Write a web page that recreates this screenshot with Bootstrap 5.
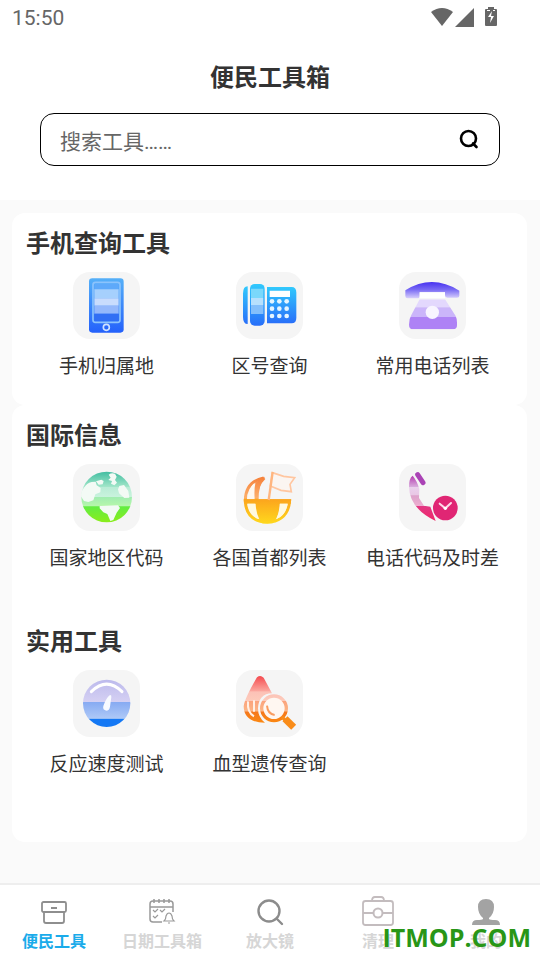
<!DOCTYPE html>
<html lang="zh-CN">
<head>
<meta charset="utf-8">
<meta name="viewport" content="width=device-width, initial-scale=1">
<title>便民工具箱</title>
<link href="https://cdn.jsdelivr.net/npm/bootstrap@5.3.0/dist/css/bootstrap.min.css" rel="stylesheet">
<style>
body{font-family:Roboto,"Noto Sans CJK SC",sans-serif;background:#fafafa;color:#333}
.status-bar{height:36px;padding:0 41px 0 12px;font-size:21px;line-height:36px;color:#666}
.status-bar svg{display:block}
.app-header{height:200px}
.app-title{font-size:24px;line-height:36px;margin:24px 0 17px}
.search-box{height:53px;margin:0 40px;padding:0 19px;border:1px solid #000;border-radius:14px}
.search-box input{font-size:21px;line-height:32px;color:#333}
.search-box input::placeholder{color:#666;opacity:1}
.tool-main{padding:13px 13px 40px 12px}
.tool-card{border-radius:13px;padding:13px 13px 24px}
.tool-card h2{font-size:24px;line-height:36px;margin:0 1px 10px}
.tool-group+.tool-group{margin-top:51px}
.tool-card-tall{padding-bottom:63px}
.tool{color:#333;font-size:19px;line-height:28px}
.tool svg{width:67px;height:67px;border-radius:17px;background:#f5f5f5;margin-bottom:14px}
.tab-bar{height:77px;border-top:2px solid #eee}
.tab-item{font-size:16px;line-height:24px;color:#d6d6d6;padding-top:9px}
.tab-item svg{width:36px;height:36px}
.tab-item.active{color:#1aabea}
.site-mark{position:absolute;right:9px;bottom:5px;font:700 25px/36px "Open Sans","Noto Sans",sans-serif;color:#289617;pointer-events:none}
</style>
</head>
<body>
<div class="d-flex flex-column min-vh-100">
<header class="app-header bg-white">
  <div class="status-bar d-flex justify-content-between align-items-center">
    <span>15:50</span>
    <svg width="68" height="24" viewBox="0 0 68 24" fill="#666" aria-hidden="true"><path d="M0 6Q11-2 22 6L11 20Z"/><path d="M43 2v19H24Z"/><path d="M57 1h6v2h2q1 0 1 1v15q0 1-1 1H55q-1 0-1-1V4q0-1 1-1h2Z"/><path fill="#fff" d="M61 5l-4 6h3l-1 6 4-7h-3ZM56 4h3v1h-3ZM62 4h2v1h-2Z"/></svg>
  </div>
  <h1 class="app-title fw-bold text-center">便民工具箱</h1>
  <form class="search-box d-flex align-items-center">
    <input class="flex-grow-1 border-0 bg-transparent p-0 pt-1" type="text" aria-label="搜索工具" placeholder="搜索工具……">
    <button class="btn p-0 border-0 d-flex" type="button" aria-label="搜索"><svg width="22" height="22" viewBox="0 0 22 22" fill="none" stroke="#000" stroke-width="2.600" stroke-linecap="round"><circle cx="10.500" cy="9.500" r="7.500"/><path d="M15 14.500L18.500 18"/></svg></button>
  </form>
</header>

<main class="tool-main flex-grow-1">
  <section class="tool-card bg-white">
    <h2 class="fw-bold">手机查询工具</h2>
    <div class="row row-cols-3 g-0 text-center">
      <a class="tool col d-flex flex-column align-items-center text-decoration-none" href="#">
        <svg viewBox="39 30 201 201" aria-hidden="true"><defs><linearGradient id="blue" x2="0" y2="1"><stop stop-color="#55b0f8"/><stop offset="1" stop-color="#2461fb"/></linearGradient></defs><rect x="87" y="49" width="104" height="163" rx="10" fill="url(#blue)"/><path fill="#5ea9fa" d="M103 65h73v20h-73Z"/><path fill="#a6d0fd" d="M103 82h73v27h-73Z"/><path fill="#c8dcfd" d="M103 109h73v22h-73Z"/><path fill="#94b8fb" d="M103 131h73v24h-73Z"/><path fill="#316ff4" d="M103 155h73v21h-73Z"/><rect x="99" y="61" width="81" height="120" rx="7" fill="none" stroke="#8cc3fc" stroke-width="5"/><circle cx="139" cy="196" r="9" fill="none" stroke="#cfe2ff" stroke-width="5"/></svg>
        <span>手机归属地</span></a>
      <a class="tool col d-flex flex-column align-items-center text-decoration-none" href="#">
        <svg viewBox="33 30 201 201" aria-hidden="true"><defs><linearGradient id="cyan" x2="0" y2="1"><stop stop-color="#31c9fd"/><stop offset="1" stop-color="#286ff9"/></linearGradient></defs><path fill="url(#cyan)" d="M68 73v113q-14 0-14-22V95q0-22 14-22Z"/><rect x="75" y="66" width="44" height="125" rx="14" fill="url(#cyan)"/><path fill="#7ad8fb" d="M78 80h37v28H78Z"/><path fill="#b6e0fd" d="M78 108h37v21H78Z"/><path fill="#83bffb" d="M78 129h37v27H78Z"/><path fill="url(#cyan)" d="M126 75h74q14 0 14 17v75q0 17-14 17h-74Z"/><path fill="#fff" d="M134 86h61v19h-61Z"/><g fill="#e4f5ff"><circle cx="141" cy="118" r="7"/><circle cx="163" cy="118" r="7"/><circle cx="185" cy="118" r="7"/><circle cx="141" cy="140" r="7"/><circle cx="163" cy="140" r="7"/><circle cx="185" cy="140" r="7"/><circle cx="141" cy="162" r="7"/><circle cx="163" cy="162" r="7"/><circle cx="185" cy="162" r="7"/></g></svg>
        <span>区号查询</span></a>
      <a class="tool col d-flex flex-column align-items-center text-decoration-none" href="#">
        <svg viewBox="36 30 201 201" aria-hidden="true"><defs><linearGradient id="violet" x2="0" y2="1"><stop stop-color="#4732f0"/><stop offset=".45" stop-color="#7768f4"/><stop offset="1" stop-color="#d9d1fc"/></linearGradient><clipPath id="phoneBase"><path d="M98 112h76l32 50q4 8 4 20v8q0 12-12 12H79q-13 0-13-14 0-18 7-29Z"/></clipPath></defs><path fill="url(#violet)" d="M55 85Q135 35 217 86v15q0 6-7 6h-29q-7 0-7-7v-9H98v10q0 8-7 8H62q-7 0-7-7Z"/><path fill="#fff" d="M98 91h76v18H98Z"/><g clip-path="url(#phoneBase)"><path fill="#e3d8fd" d="M55 109h170v27H55Z"/><path fill="#cbb5fa" d="M55 136h170v29H55Z"/><path fill="#ae82f5" d="M55 165h170v40H55Z"/></g><circle cx="136" cy="151" r="20" fill="#f8f5ff"/></svg>
        <span>常用电话列表</span></a>
    </div>
  </section>

  <section class="tool-card tool-card-tall bg-white">
    <div class="tool-group">
    <h2 class="fw-bold">国际信息</h2>
    <div class="row row-cols-3 g-0 text-center">
      <a class="tool col d-flex flex-column align-items-center text-decoration-none" href="#">
        <svg viewBox="39 30 201 201" aria-hidden="true"><defs><linearGradient id="green" x2="0" y2="1"><stop stop-color="#42bda1"/><stop offset=".3" stop-color="#a2e6c9"/><stop offset=".31" stop-color="#b9ecd6"/><stop offset=".5" stop-color="#c9f3dd"/><stop offset=".51" stop-color="#a1edb0"/><stop offset=".68" stop-color="#b6f7ab"/><stop offset=".69" stop-color="#62ed43"/><stop offset="1" stop-color="#8aed1b"/></linearGradient></defs><circle cx="140" cy="129" r="76" fill="url(#green)"/><path fill="#f3faf5" d="M72 101q8-13 23-17l12-1 3 11 12 8-1 13-15 6-6 18-15 5-13-3-8-12q-3-16 8-28ZM108 82l16-5 7 4-3 10-12 1ZM146 62q8-6 19-3l5 9-5 10 6 8-8 8-10-5 3-8-11-3 7-7ZM178 96l14-3 13 18 3 20-15 1-16-14-3-12ZM119 156l55-2 6 8-10 14-10 22-9 3-9-21-12-5-11-12Z"/></svg>
        <span>国家地区代码</span></a>
      <a class="tool col d-flex flex-column align-items-center text-decoration-none" href="#">
        <svg viewBox="33 30 201 201" aria-hidden="true"><defs><linearGradient id="gold" gradientUnits="userSpaceOnUse" x1="0" y1="60" x2="0" y2="210"><stop stop-color="#f47932"/><stop offset=".48" stop-color="#fdb06b"/><stop offset=".51" stop-color="#fca51d"/><stop offset="1" stop-color="#ffd91d"/></linearGradient></defs><g fill="none" stroke="url(#gold)" stroke-width="9"><path d="M116 72Q61 83 61 140q2 62 66 65 62-4 67-65H61M118 72q-26 24-24 68 0 46 19 63"/><path d="M160 140q0 44-19 63"/></g><path fill="url(#gold)" d="M56 136h142v13h-37q-2 40-18 59h-32q-18-19-19-59H57Z"/><path fill="#fff9df" d="M68 149h24q1 28 11 47-32-13-35-47ZM165 149h23q-5 35-34 47 10-20 11-47Z"/><path fill="url(#gold)" d="M91 87q9-10 29-19-20 24-19 68h-12q-2-28 2-49Z"/><path fill="#fff8ee" d="M88 87q-16 14-20 47h20q-3-29 0-47Z"/><path fill="#fbf5f1" stroke="#ffc6a0" stroke-width="5" d="M142 56l34 11 33 4-14 20 4 22-31-4-32-13Z"/><path fill="none" stroke="#ffb57f" stroke-width="7" d="M143 54l-12 84"/></svg>
        <span>各国首都列表</span></a>
      <a class="tool col d-flex flex-column align-items-center text-decoration-none" href="#">
        <svg viewBox="36 30 201 201" aria-hidden="true"><defs><linearGradient id="pink" x2="0" y2="1"><stop stop-color="#b43baf"/><stop offset=".24" stop-color="#d8a9dc"/><stop offset=".25" stop-color="#ead1ed"/><stop offset=".43" stop-color="#e9c7e5"/><stop offset=".44" stop-color="#dda2cb"/><stop offset=".66" stop-color="#edaed0"/><stop offset=".67" stop-color="#e23683"/><stop offset="1" stop-color="#f02769"/></linearGradient></defs><path fill="url(#pink)" d="M77 65q-11 7-11 33 1 65 80 103l-16-43-19-3-15-23 1-27Q90 80 77 65Z"/><path stroke="#aa43b5" stroke-width="15" stroke-linecap="round" d="M92 62l16 24"/><circle cx="175" cy="162" r="37" fill="#e02674"/><path fill="none" stroke="#ffd9e8" stroke-width="6" stroke-linecap="round" d="M158 149l17 14 17-16"/><circle cx="175" cy="163" r="5" fill="#fff"/></svg>
        <span>电话代码及时差</span></a>
    </div>
    </div>
    <div class="tool-group">
    <h2 class="fw-bold">实用工具</h2>
    <div class="row row-cols-3 g-0 text-center">
      <a class="tool col d-flex flex-column align-items-center text-decoration-none" href="#">
        <svg viewBox="39 30 201 201" aria-hidden="true"><defs><clipPath id="dial"><circle cx="140" cy="130" r="71"/></clipPath><linearGradient id="lilac" x2="0" y2="1"><stop stop-color="#bbb9ec"/><stop offset="1" stop-color="#d5d0f3"/></linearGradient><linearGradient id="sky" x2="0" y2="1"><stop stop-color="#86aaf2"/><stop offset="1" stop-color="#afc9f7"/></linearGradient></defs><g clip-path="url(#dial)"><path fill="url(#lilac)" d="M65 55h150v71H65Z"/><path fill="url(#sky)" d="M65 126h150v50H65Z"/><path fill="#1478f4" d="M65 176h150v30H65Z"/></g><path fill="none" stroke="#fff" stroke-width="9" stroke-linecap="round" d="M94 95q46-45 92 0"/><path fill="#f8faff" d="M150 105q5 0 4 7l-4 28q-2 12-11 12-12-2-9-14 8-24 20-33Z"/></svg>
        <span>反应速度测试</span></a>
      <a class="tool col d-flex flex-column align-items-center text-decoration-none" href="#">
        <svg viewBox="33 30 201 201" aria-hidden="true"><defs><linearGradient id="blood" gradientUnits="userSpaceOnUse" x1="0" y1="48" x2="0" y2="207"><stop stop-color="#f44a4f"/><stop offset=".28" stop-color="#fba69d"/><stop offset=".3" stop-color="#fcc1b6"/><stop offset=".47" stop-color="#fdcbbb"/><stop offset=".48" stop-color="#fba47d"/><stop offset=".66" stop-color="#fdb584"/><stop offset=".68" stop-color="#f5781c"/><stop offset="1" stop-color="#ff920c"/></linearGradient></defs><path fill="url(#blood)" d="M96 52q10-8 20 1l25 47q-40 1-42 45 0 28 21 43-63 0-64-49 2-22 40-87Z"/><path fill="none" stroke="#fff0e6" stroke-width="6" d="M69 124q-3 33 18 45M87 121v34"/><circle cx="147" cy="145" r="37" fill="#fff7f1" stroke="url(#blood)" stroke-width="10"/><path fill="none" stroke="#f99c60" stroke-width="6" d="M126 137q2 25 23 28"/><path stroke="#f98c19" stroke-width="10" d="M171 171l14 14"/><path stroke="#f98c19" stroke-width="21" stroke-linejoin="round" d="M180 176l26 26"/></svg>
        <span>血型遗传查询</span></a>
    </div>
    </div>
  </section>
</main>

<nav class="tab-bar position-relative bg-white">
  <div class="row row-cols-5 g-0 text-center fw-bold">
    <a class="tab-item active col d-flex flex-column align-items-center text-decoration-none" href="#" aria-current="page"><svg viewBox="0 0 36 36" fill="none" stroke="#8e8e8e" stroke-width="1.800" aria-hidden="true"><rect x="6" y="8" width="24" height="10" rx="1.500"/><path d="M8 18v9q0 2 2 2h16q2 0 2-2v-9M15 14h6"/></svg><span>便民工具</span></a>
    <a class="tab-item col d-flex flex-column align-items-center text-decoration-none" href="#"><svg viewBox="0 0 36 36" fill="none" stroke="#999" stroke-width="1.500" aria-hidden="true"><path d="M18 28H9q-3 0-3-3V10q0-3 3-3h17q3 0 3 3v8M6 13h23M10 5v4M15 5v4M20 5v4M25 5v4"/><path stroke-width="1.200" d="M9 16l2 2 3-3M16 16l2 2 3-3M9 22l2 2 3-3M20 27q2-2 2-5 1-3 3-3t3 3q0 3 2 5ZM24 29h2"/></svg><span>日期工具箱</span></a>
    <a class="tab-item col d-flex flex-column align-items-center text-decoration-none" href="#"><svg viewBox="0 0 36 36" fill="none" stroke="#8c8c8c" stroke-width="2.400" stroke-linecap="round" aria-hidden="true"><circle cx="17" cy="17" r="10.500"/><path d="M24.500 24.500L30 30"/></svg><span>放大镜</span></a>
    <a class="tab-item col d-flex flex-column align-items-center text-decoration-none" href="#"><svg viewBox="0 0 36 36" fill="none" stroke="#c3bcbe" stroke-width="1.800" aria-hidden="true"><rect x="3" y="7" width="30" height="24" rx="2.500"/><path d="M12 7q0-4 3-4h6q3 0 3 4M3 19h11M22 19h11"/><circle cx="18" cy="19" r="4.500" stroke-width="2"/></svg><span>清理</span></a>
    <a class="tab-item col d-flex flex-column align-items-center text-decoration-none" href="#"><svg viewBox="0 0 36 36" fill="#a3a3a3" aria-hidden="true"><path d="M18 5q8 0 8 8 0 7-5 11v1q1 1 6 1 5 0 5 5H4q0-5 5-5 5 0 6-1v-1q-5-4-5-11 0-8 8-8Z"/></svg><span>我的</span></a>
  </div>
  <div class="site-mark">ITMOP.COM</div>
</nav>
</div>
<script src="https://cdn.jsdelivr.net/npm/bootstrap@5.3.0/dist/js/bootstrap.bundle.min.js"></script>
</body>
</html>
